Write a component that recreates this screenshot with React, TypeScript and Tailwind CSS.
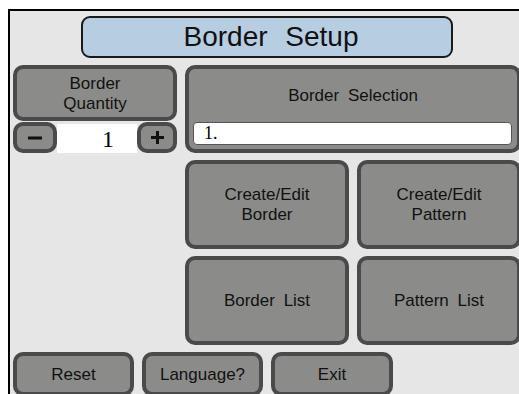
const font = { fontFamily: '"Liberation Sans", Arial, sans-serif' };

function GrayButton({
  children,
  className = "",
}: {
  children?: React.ReactNode;
  className?: string;
}) {
  return (
    <div
      className={`flex items-center justify-center rounded-[10px] border-4 border-[#4a4a4a] bg-[#8b8c89] text-center text-[17px] leading-[20px] text-[#111] [word-spacing:4px] ${className}`}
    >
      {children}
    </div>
  );
}

function Minus() {
  return (
    <svg width="14" height="4" viewBox="0 0 14 4">
      <rect x="0" y="0.5" width="14" height="3" fill="#111" />
    </svg>
  );
}

function Plus() {
  return (
    <svg width="13" height="13" viewBox="0 0 13 13">
      <rect x="0" y="5" width="13" height="3" fill="#111" />
      <rect x="5" y="0" width="3" height="13" fill="#111" />
    </svg>
  );
}

export default function App() {
  return (
    <div className="h-[394px] w-[519px] overflow-hidden bg-white pl-[8px] pt-[9px]" style={font}>
      <div className="h-[400px] w-[600px] border-l-2 border-t-2 border-black bg-[#e6e6e6] pl-[3px] pt-[5px]">
        <div className="ml-[68px] flex h-[42px] w-[372px] items-center justify-center rounded-[9px] border-2 border-[#1a1a1a] bg-[#b7cde1] pl-[8px] text-[28px] text-[#111] [word-spacing:10px]">
          Border Setup
        </div>

        <div className="mt-[7px] grid grid-cols-[164px_164px_164px] grid-rows-[88px_89px_89px] gap-x-[8px] gap-y-[7px]">
          <div className="flex flex-col">
            <GrayButton className="h-[56px] pt-[1px] text-[13px] leading-[16px]">
              Border
              <br />
              Quantity
            </GrayButton>
            <div className="mt-[1px] flex h-[31px]">
              <GrayButton className="w-[44px] rounded-[9px]">
                <Minus />
              </GrayButton>
              <div
                className="mt-[2px] flex flex-1 items-center justify-end bg-white pr-[23px] text-[24px] leading-none text-black"
                style={{ fontFamily: '"Liberation Serif", serif' }}
              >
                1
              </div>
              <GrayButton className="w-[40px] rounded-[9px]">
                <Plus />
              </GrayButton>
            </div>
          </div>

          <div className="col-span-2 flex flex-col rounded-[10px] border-4 border-[#4a4a4a] bg-[#8b8c89] px-[4px] pb-[4px]">
            <div className="flex flex-1 items-center justify-center text-[17px] text-[#111] [word-spacing:4px]">
              Border Selection
            </div>
            <div
              className="flex h-[23px] w-[319px] items-center rounded-[4px] border border-[#555] bg-white pl-[10px] text-[18px] text-black"
              style={{ fontFamily: '"Liberation Serif", serif' }}
            >
              1.
            </div>
          </div>

          <div />
          <GrayButton>
            Create/Edit
            <br />
            Border
          </GrayButton>
          <GrayButton>
            Create/Edit
            <br />
            Pattern
          </GrayButton>

          <div />
          <GrayButton>Border List</GrayButton>
          <GrayButton>Pattern List</GrayButton>
        </div>

        <div className="mt-[7px] flex gap-[8px]">
          <GrayButton className="h-[44px] w-[121px] pt-[2px]">Reset</GrayButton>
          <GrayButton className="h-[44px] w-[121px] pt-[2px]">Language?</GrayButton>
          <GrayButton className="h-[44px] w-[122px] pt-[2px]">Exit</GrayButton>
        </div>
      </div>
    </div>
  );
}
